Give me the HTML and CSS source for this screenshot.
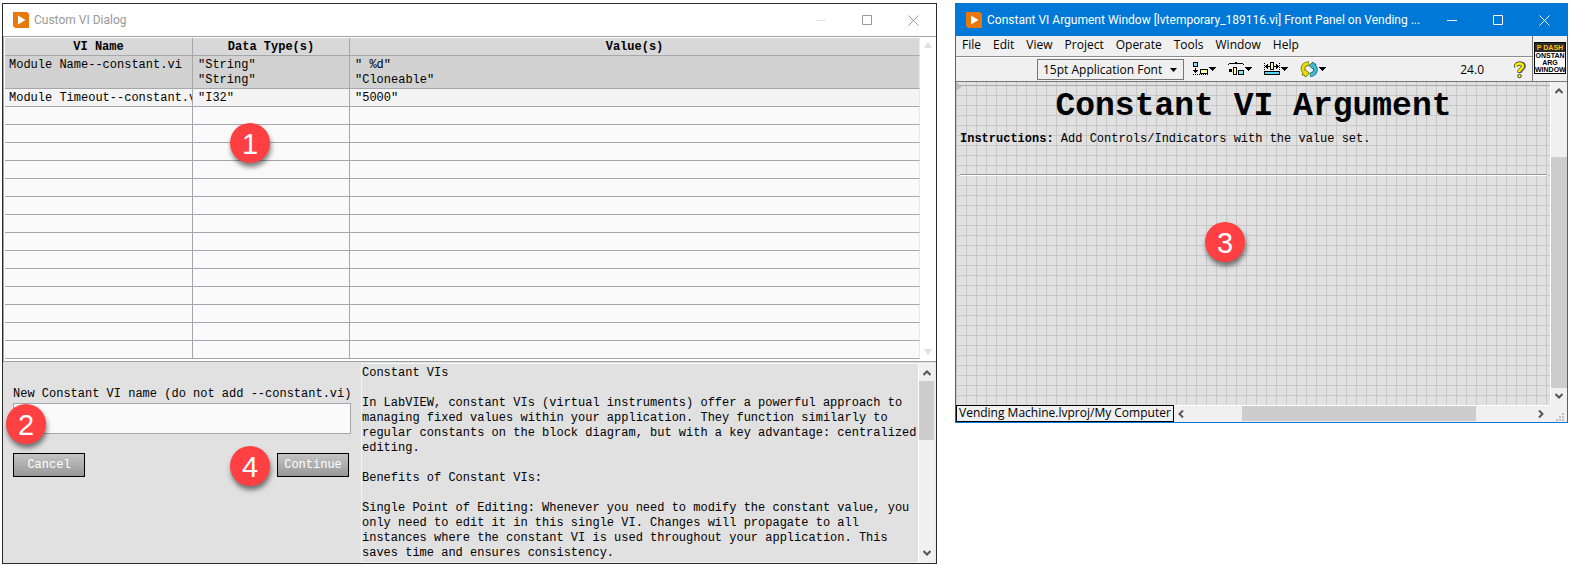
FILE: index.html
```html
<!DOCTYPE html>
<html lang="en">
<head>
<meta charset="utf-8">
<title>Custom VI Dialog</title>
<link rel="stylesheet" href="styles.css">
</head>
<body>
<main class="desktop">
  <section class="window dialog" aria-label="Custom VI Dialog">
    <header class="titlebar">
      <svg class="app-icon" viewBox="0 0 16 16"><path d="M0 0H14L16 2V16H2L0 14Z" fill="#e8770c"/><path d="M5 3.500L12.500 8L5 12.500Z" fill="#fff"/></svg>
      <h1 class="title">Custom VI Dialog</h1>
      <button class="win-btn faint" aria-label="Minimize"><svg viewBox="0 0 11 11"><path d="M0 5.500H10"/></svg></button>
      <button class="win-btn" aria-label="Maximize"><svg viewBox="0 0 11 11"><path d="M.5 .5H9.500V9.500H.5Z"/></svg></button>
      <button class="win-btn" aria-label="Close"><svg viewBox="0 0 11 11"><path d="M.5 .5L10.500 10.500M10.500 .5L.5 10.500"/></svg></button>
    </header>
    <div class="list">
      <div class="list-body">
      <table class="vi-table">
        <colgroup><col class="col-name"><col class="col-type"><col></colgroup>
        <thead><tr><th>VI Name</th><th>Data Type(s)</th><th>Value(s)</th></tr></thead>
        <tbody>
          <tr class="selected"><td>Module Name--constant.vi</td><td>"String"<br>"String"</td><td>" %d"<br>"Cloneable"</td></tr>
          <tr class="filled"><td>Module Timeout--constant.v</td><td>"I32"</td><td>"5000"</td></tr>
          <tr><td></td><td></td><td></td></tr>
          <tr><td></td><td></td><td></td></tr>
          <tr><td></td><td></td><td></td></tr>
          <tr><td></td><td></td><td></td></tr>
          <tr><td></td><td></td><td></td></tr>
          <tr><td></td><td></td><td></td></tr>
          <tr><td></td><td></td><td></td></tr>
          <tr><td></td><td></td><td></td></tr>
          <tr><td></td><td></td><td></td></tr>
          <tr><td></td><td></td><td></td></tr>
          <tr><td></td><td></td><td></td></tr>
          <tr><td></td><td></td><td></td></tr>
          <tr><td></td><td></td><td></td></tr>
          <tr><td></td><td></td><td></td></tr>
        </tbody>
      </table>
      </div>
      <div class="list-scroll">
        <svg viewBox="0 0 8 6"><path d="M4 0L8 6H0Z"/></svg>
        <svg viewBox="0 0 8 6"><path d="M0 0H8L4 6Z"/></svg>
      </div>
      <span class="badge badge-1">1</span>
    </div>
    <div class="lower">
      <form class="entry">
        <label for="vi-name">New Constant VI name (do not add --constant.vi)</label>
        <input id="vi-name" type="text">
        <div class="actions">
          <button type="button">Cancel</button>
          <button type="button">Continue</button>
        </div>
        <span class="badge badge-2">2</span>
        <span class="badge badge-4">4</span>
      </form>
      <div class="help">
        <div class="help-text">Constant VIs

In LabVIEW, constant VIs (virtual instruments) offer a powerful approach to
managing fixed values within your application. They function similarly to
regular constants on the block diagram, but with a key advantage: centralized
editing.

Benefits of Constant VIs:

Single Point of Editing: Whenever you need to modify the constant value, you
only need to edit it in this single VI. Changes will propagate to all
instances where the constant VI is used throughout your application. This
saves time and ensures consistency.</div>
        <div class="vscroll">
          <svg viewBox="0 0 8 6"><path d="M.5 5L4 1.500L7.500 5"/></svg>
          <div class="vtrack"><i class="thumb help-thumb"></i></div>
          <svg viewBox="0 0 8 6"><path d="M.5 1L4 4.500L7.500 1"/></svg>
        </div>
      </div>
    </div>
  </section>

  <section class="window panel" aria-label="Constant VI Argument Window">
    <header class="titlebar">
      <svg class="app-icon" viewBox="0 0 16 16"><path d="M0 0H14L16 2V16H2L0 14Z" fill="#e8770c"/><path d="M5 3.500L12.500 8L5 12.500Z" fill="#fff"/></svg>
      <h2 class="title">Constant VI Argument Window [lvtemporary_189116.vi] Front Panel on Vending ...</h2>
      <button class="win-btn" aria-label="Minimize"><svg viewBox="0 0 11 11"><path d="M0 5.500H10"/></svg></button>
      <button class="win-btn" aria-label="Maximize"><svg viewBox="0 0 11 11"><path d="M.5 .5H9.500V9.500H.5Z"/></svg></button>
      <button class="win-btn" aria-label="Close"><svg viewBox="0 0 11 11"><path d="M.5 .5L10.500 10.500M10.500 .5L.5 10.500"/></svg></button>
    </header>
    <div class="bars">
      <div class="bars-main">
        <nav class="menu">
          <button>File</button><button>Edit</button><button>View</button><button>Project</button><button>Operate</button><button>Tools</button><button>Window</button><button>Help</button>
        </nav>
        <div class="toolbar">
          <div class="font-pick">
            <select aria-label="Font"><option>15pt Application Font</option></select>
            <svg viewBox="0 0 7 4"><path d="M0 0H7L3.500 4Z"/></svg>
          </div>
          <button class="tool" aria-label="Align objects"><svg viewBox="0 0 36 20" shape-rendering="crispEdges">
            <path d="M2 2H7V7H2Z" fill="#000"/><path d="M3 3H6V6H3Z" fill="#7fe4ff"/>
            <path d="M4 8H5V13H4ZM2 10H7V11H6V12H3V11H2Z"/><path d="M9 9H17V14H9Z"/><path d="M10 10H16V13H10Z" fill="#ffff99"/>
            <path d="M2 14.500H17" stroke="#000" stroke-dasharray="1 1"/><path d="M18 7H25V8H24V9H23V10H22V11H21V10H20V9H19V8H18Z"/></svg></button>
          <button class="tool" aria-label="Distribute objects"><svg viewBox="0 0 36 20" shape-rendering="crispEdges">
            <path d="M1 4H2V3H8V2H10V3H16V4H17V5H16V4H2V5H1Z"/><path d="M2 9H5V12H2Z"/><path d="M6 7H10V15H6Z"/><path d="M7 8H9V14H7Z" fill="#ffff99"/>
            <path d="M11 10H17V15H11Z"/><path d="M12 11H16V14H12Z" fill="#7fe4ff"/><path d="M18 7H25V8H24V9H23V10H22V11H21V10H20V9H19V8H18Z"/></svg></button>
          <button class="tool" aria-label="Resize objects"><svg viewBox="0 0 36 20" shape-rendering="crispEdges">
            <path d="M1.500 3V12M16.500 3V12" stroke="#000" stroke-dasharray="1 1"/><path d="M2 6H7V7H2ZM3 5H4V8H3ZM4 4H5V9H4ZM11 6H16V7H11ZM14 5H15V8H14ZM13 4H14V9H13Z"/>
            <path d="M7 2H11V10H7Z"/><path d="M8 3H10V9H8Z" fill="#ffff99"/><path d="M1 11H17V15H1Z"/><path d="M2 12H16V14H2Z" fill="#57d5ee"/><path d="M18 7H25V8H24V9H23V10H22V11H21V10H20V9H19V8H18Z"/></svg></button>
          <button class="tool" aria-label="Reorder"><svg viewBox="0 0 36 20">
            <path d="M10 3.500C4 4 2 9 6 13" fill="none" stroke="#77720a" stroke-width="4.500"/>
            <path d="M6 9.500L10.500 13.500L6.500 17L5 15H3Z" fill="#e5dc0c" stroke="#77720a"/>
            <path d="M9.500 3.500C4 4 2 9 6 13" fill="none" stroke="#e5dc0c" stroke-width="2.800"/>
            <path d="M11 15C17 14 18 9 14.500 5.500" fill="none" stroke="#1b6b80" stroke-width="4.500"/>
            <path d="M14.500 9.500L10 5.500L14 2L15 4H17Z" fill="#45b9d1" stroke="#1b6b80"/>
            <path d="M11.500 15C17 14 18 9 14.500 5.500" fill="none" stroke="#45b9d1" stroke-width="2.800"/>
            <path d="M20 7H27V8H26V9H25V10H24V11H23V10H22V9H21V8H20Z" shape-rendering="crispEdges"/></svg></button>
          <span class="version">24.0</span>
          <button class="help-btn" aria-label="Context help"><svg viewBox="0 0 14 18"><path d="M3 6C2 2 11 1 11 5C11 8 7 8 7 12" fill="none" stroke="#777" stroke-width="4"/><path d="M3 6C2 1.500 10 1.500 10 5C10 8 6 8 6 11.500" fill="none" stroke="#444" stroke-width="4"/><path d="M3 6C2 1.500 10 1.500 10 5C10 8 6 8 6 11" fill="none" stroke="#fff200" stroke-width="2.500"/><circle cx="6.500" cy="15" r="1.800" fill="#fff200" stroke="#444"/></svg></button>
        </div>
      </div>
      <div class="vi-icon-cell"><div class="vi-icon"><b>P DASH</b><span>ONSTAN</span><span>ARG</span><span>WINDOW</span></div></div>
    </div>
    <div class="work">
      <div class="canvas">
        <svg class="corner" viewBox="0 0 6 10"><path d="M0 0L6 4.500L0 9Z"/></svg>
        <h3>Constant VI Argument</h3>
        <p><b>Instructions:</b> Add Controls/Indicators with the value set.</p>
        <hr>
        <span class="badge badge-3">3</span>
      </div>
      <div class="vscroll">
        <svg viewBox="0 0 8 6"><path d="M.5 5L4 1.500L7.500 5"/></svg>
        <div class="vtrack"><i class="thumb work-thumb"></i></div>
        <svg viewBox="0 0 8 6"><path d="M.5 1L4 4.500L7.500 1"/></svg>
      </div>
    </div>
    <footer class="status">
      <span class="context">Vending Machine.lvproj/My Computer</span>
      <div class="hscroll">
        <svg viewBox="0 0 6 8"><path d="M5 .5L1.500 4L5 7.500"/></svg>
        <div class="htrack"><i class="hthumb"></i></div>
        <svg viewBox="0 0 6 8"><path d="M1 .5L4.500 4L1 7.500"/></svg>
      </div>
      <svg class="grip" viewBox="0 0 8 8"><path d="M6 0H8V2H6ZM3 3H5V5H3ZM6 3H8V5H6ZM0 6H2V8H0ZM3 6H5V8H3ZM6 6H8V8H6Z"/></svg>
    </footer>
  </section>
</main>
</body>
</html>
```
FILE: styles.css
```css
* { box-sizing: border-box; }
body {
  margin: 0;
  background: #fff;
  color: #000;
  font: 12px/15px "Liberation Mono", monospace;
}
button, input, select { font: inherit; color: inherit; margin: 0; }
svg { display: block; flex: none; }

.desktop {
  display: grid;
  grid-template-columns: minmax(0, 935fr) minmax(0, 613fr);
  gap: 18px;
  align-items: start;
  min-height: 100vh;
  padding: 3px 1px 2px 2px;
}
.window { display: flex; flex-direction: column; }
.dialog { align-self: stretch; border: 1px solid #2b2b2b; }
.panel { border: 1px solid #0078d7; }

/* Title bars */
.titlebar {
  display: flex;
  align-items: center;
  height: 32px;
  padding-left: 10px;
  color: #999;
  font-family: Roboto, sans-serif;
}
.panel .titlebar { background: #0078d7; color: #fff; }
.app-icon { width: 16px; height: 16px; }
.title {
  flex: 1;
  min-width: 0;
  margin: 0;
  padding-left: 5px;
  font-size: 12px;
  font-weight: 400;
  white-space: nowrap;
  overflow: hidden;
}
.win-btn {
  display: grid;
  place-items: center;
  width: 46px;
  height: 32px;
  padding: 0;
  border: 0;
  background: none;
}
.win-btn svg { width: 11px; height: 11px; fill: none; stroke: currentColor; }
.faint { color: #e4e4e4; }

/* VI list */
.list {
  position: relative;
  display: flex;
  height: 326px;
  border-top: 1px solid #a0a3a6;
  border-bottom: 1px solid #a0a3a6;
  border-left: 1px solid #a0a3a6;
  padding: 1px 0 0 1px;
  overflow: hidden;
}
.list-body { flex: 1; min-width: 0; }
.vi-table {
  width: 100%;
  table-layout: fixed;
  border-collapse: separate;
  border-spacing: 0;
}
.col-name { width: 188px; }
.col-type { width: 157px; }
.vi-table th, .vi-table td {
  height: 18px;
  padding: 2px 0 0 5px;
  border-bottom: 1px solid #a5a7aa;
  border-right: 1px solid #a5a7aa;
  background: #fafafa;
  text-align: left;
  vertical-align: top;
  white-space: nowrap;
  overflow: hidden;
}
.vi-table th { background: #d8d8d8; text-align: center; padding: 2px 0 0; }
.vi-table td:first-child { padding-left: 4px; }
.vi-table th:last-child, .vi-table td:last-child { border-right-color: #e8e8e8; }
.vi-table .selected td { height: 33px; background: #d2d2d2; }
.vi-table .filled td { background: #f4f4f4; }
.list-scroll {
  display: flex;
  flex-direction: column;
  justify-content: space-between;
  align-items: center;
  width: 16px;
  padding: 4px 0 6px;
}
.list-scroll svg { width: 8px; height: 6px; fill: #e0e0e0; }

/* Lower area */
.lower {
  flex: 1;
  display: grid;
  grid-template-columns: 358px minmax(0, 1fr);
  background: #e1e1e1;
}
.entry {
  position: relative;
  display: flex;
  flex-direction: column;
  padding: 25px 10px 0 10px;
}
.entry label { padding-bottom: 1px; white-space: nowrap; }
.entry input {
  width: 100%;
  height: 31px;
  padding: 0 6px;
  border: 1px solid #a5a7aa;
  background: #fafafa;
}
.actions {
  display: flex;
  justify-content: space-between;
  padding: 19px 2px 0 0;
}
.actions button {
  width: 72px;
  height: 24px;
  padding: 1px 0 0;
  border: 1px solid #000;
  background: linear-gradient(#c4c4c4, #979797);
  color: #fff;
}
.help {
  display: flex;
  margin-top: 1px;
  border: 1px solid #f4f4f4;
  border-right: 2px solid #ececec;
}
.help-text {
  flex: 1;
  min-width: 0;
  padding-top: 2px;
  white-space: pre;
}

/* Scroll bars */
.vscroll {
  display: flex;
  flex-direction: column;
  align-items: center;
  width: 17px;
  padding: 6px 0;
  border-left: 1px solid #fff;
  background: #f0f0f0;
}
.help .vscroll { width: 16px; }
.vscroll svg { width: 8px; height: 6px; }
.vscroll svg, .hscroll svg { fill: none; stroke: #555; stroke-width: 2; }
.vtrack { flex: 1; width: 100%; padding: 5px 0; }
.thumb { display: block; background: #cdcdcd; }
.help-thumb { height: 59px; }
.work-thumb { height: 231px; margin-top: 58px; }

/* Menu and tool bar */
.bars {
  display: flex;
  border-bottom: 1px solid #777;
  background: #f0f0f0;
  font-family: "Open Sans", sans-serif;
}
.bars-main { flex: 1; min-width: 0; }
.menu {
  display: flex;
  gap: 12px;
  height: 21px;
  padding: 0 6px 3px;
  border-bottom: 1px solid #8c8c8c;
}
.menu button { padding: 0; border: 0; background: none; }
.toolbar {
  display: flex;
  align-items: center;
  height: 24px;
  padding: 0 5px 0 81px;
  border-top: 1px solid #fff;
}
.font-pick { position: relative; margin-right: 7px; }
.font-pick select {
  display: block;
  appearance: none;
  width: 147px;
  height: 21px;
  padding: 0 0 1px 5px;
  border: 1px solid #777;
  border-radius: 0;
  background: #f0f0f0;
}
.font-pick svg { position: absolute; right: 7px; top: 9px; width: 7px; height: 4px; }
.tool, .help-btn { padding: 0; border: 0; background: none; }
.tool svg { width: 36px; height: 20px; }
.version { margin-left: auto; padding-right: 29px; }
.help-btn svg { width: 14px; height: 18px; }
.vi-icon-cell {
  width: 35px;
  padding: 6px 1px 0;
  border-left: 1px solid #777;
}
.vi-icon {
  display: flex;
  flex-direction: column;
  width: 32px;
  height: 32px;
  border: 1px solid #000;
  background: #fff;
  font: bold 7px/7px "Liberation Sans", sans-serif;
  text-align: center;
}
.vi-icon b { height: 9px; line-height: 9px; background: #2b2b2b; color: #ffc20e; }

/* Front panel */
.work { display: flex; min-height: 323px; }
.canvas {
  position: relative;
  flex: 1;
  min-width: 0;
  padding: 0 3px 0 4px;
  background-color: #e1e1e1;
  background-image:
    linear-gradient(#aaa, #aaa),
    linear-gradient(90deg, #c8c8c8 1px, transparent 1px),
    linear-gradient(#c8c8c8 1px, transparent 1px);
  background-size: 100% 1px, 10px 10px, 10px 10px;
  background-position: 0 3px, 0 0, 0 3px;
  background-repeat: no-repeat, repeat, repeat;
}
.corner { position: absolute; left: 0; top: 0; width: 6px; height: 10px; fill: #bbb; }
.canvas h3 {
  margin: 0;
  padding-top: 5px;
  font-size: 33px;
  line-height: 40px;
  text-align: center;
}
.canvas p { margin: 5px 0 27px; }
.canvas hr {
  margin: 0;
  border: 0;
  border-top: 1px solid #999;
  border-bottom: 1px solid #fff;
}
.status {
  display: flex;
  align-items: stretch;
  height: 17px;
  background: #f0f0f0;
}
.context {
  padding: 0 2px;
  border: 1px solid #000;
  font: 12px/14px "Open Sans", sans-serif;
  white-space: nowrap;
}
.hscroll {
  flex: 1;
  display: flex;
  align-items: center;
  padding: 0 5px 0 4px;
  border-top: 1px solid #fff;
}
.hscroll svg { width: 6px; height: 8px; }
.htrack { flex: 1; height: 100%; padding-left: 16%; }
.hthumb { display: block; width: 79%; height: 15px; background: #cdcdcd; }
.grip { align-self: flex-end; width: 8px; height: 8px; margin: 0 3px 1px 7px; fill: #bfbfbf; }

/* Callout markers */
.badge {
  position: absolute;
  width: 40px;
  height: 40px;
  border-radius: 50%;
  background: #ff4043;
  box-shadow: 1px 4px 5px rgba(0, 0, 0, .5);
  color: #fff;
  font: 29px/42px "Liberation Sans", sans-serif;
  text-align: center;
}
.badge-1 { left: 226px; top: 86px; }
.badge-2 { left: 3px; top: 42px; }
.badge-4 { left: 227px; top: 84px; }
.badge-3 { left: 249px; top: 140px; }
```
